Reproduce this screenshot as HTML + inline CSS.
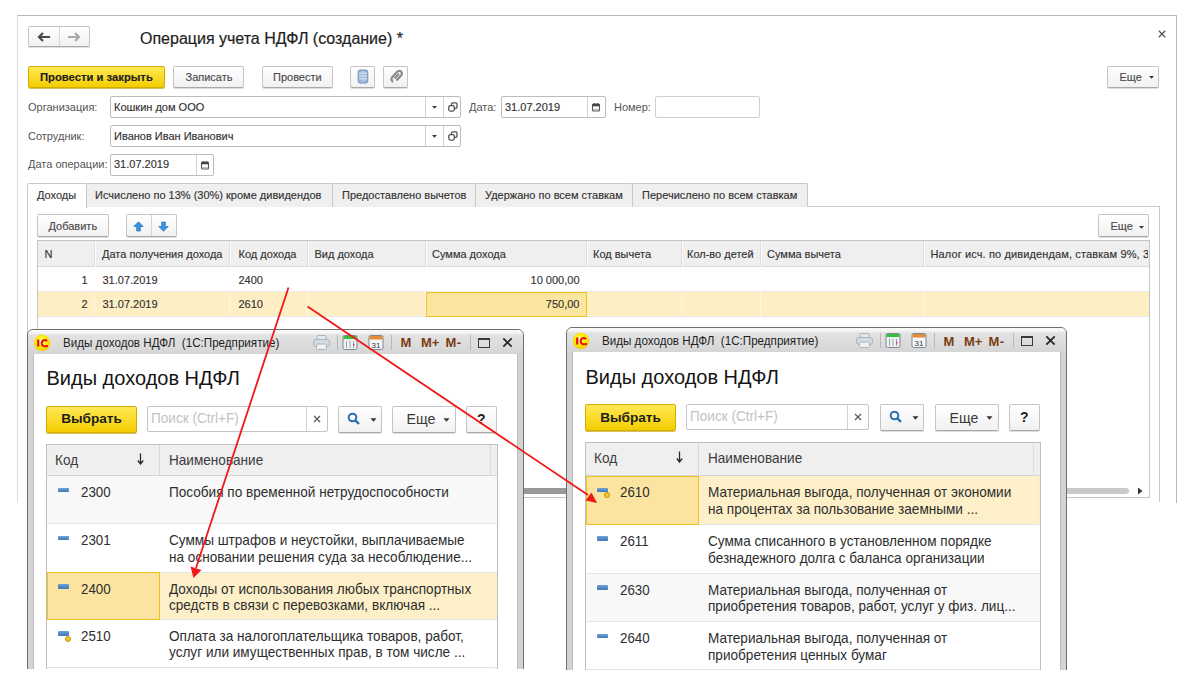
<!DOCTYPE html>
<html><head><meta charset="utf-8">
<style>
html,body{margin:0;padding:0;}
body{width:1200px;height:693px;overflow:hidden;background:#fff;position:relative;font-family:"Liberation Sans",sans-serif;color:#333;}
.a{position:absolute;box-sizing:border-box;}
.t{position:absolute;white-space:pre;line-height:1;}
.f11{font-size:11px;-webkit-text-stroke-width:0.15px;}
.btn{position:absolute;box-sizing:border-box;border:1px solid #c4c4c4;border-bottom-color:#a9a9a9;border-radius:2px;background:linear-gradient(#ffffff,#f1f1f1);box-shadow:0 1px 0 #dedede;}
.ybtn{position:absolute;box-sizing:border-box;border:1px solid #d2ad00;border-radius:2px;background:linear-gradient(#ffe955,#f4cd00);box-shadow:0 1px 0 #d8c060;}
.inp{position:absolute;box-sizing:border-box;border:1px solid #bdbdbd;border-radius:2px;background:#fff;}
.vl{position:absolute;width:1px;background:#cfcfcf;}
.hl{position:absolute;height:1px;background:#cfcfcf;}
.lbl{color:#555;-webkit-text-stroke-width:0;}
.tab{position:absolute;box-sizing:border-box;border:1px solid #c9c9c9;border-bottom:none;background:#efefef;border-radius:2px 2px 0 0;}
</style></head><body>

<!-- main form border -->
<div class="a" style="left:17px;top:15px;width:1160px;height:488px;border:1px solid #b8b8b8;border-left-color:#dcdcdc;border-bottom:none;"></div>

<!-- nav buttons -->
<div class="btn" style="left:28px;top:26px;width:62px;height:21px;"></div>
<div class="vl" style="left:59px;top:27px;height:19px;background:#d6d6d6;"></div>
<svg class="a" style="left:36px;top:31px" width="16" height="12" viewBox="0 0 16 12"><path d="M3 6H14M7 2L3 6L7 10" stroke="#4a4a4a" stroke-width="2.2" fill="none"/></svg>
<svg class="a" style="left:66px;top:31px" width="16" height="12" viewBox="0 0 16 12"><path d="M2 6H13M9 2L13 6L9 10" stroke="#a9a9a9" stroke-width="2.2" fill="none"/></svg>

<!-- title -->
<div class="t" style="left:140px;top:30.6px;font-size:16px;color:#1e1e1e;-webkit-text-stroke-width:0.2px;">Операция учета НДФЛ (создание) *</div>
<svg class="a" style="left:1158px;top:30px" width="8" height="8" viewBox="0 0 8 8"><path d="M0.8 0.8L7.2 7.2M7.2 0.8L0.8 7.2" stroke="#555" stroke-width="1.3"/></svg>

<!-- toolbar -->
<div class="ybtn" style="left:28px;top:66px;width:137px;height:22px;"></div>
<div class="t f11" style="left:40px;top:71.5px;font-size:11.25px;font-weight:bold;color:#1e1e1e;">Провести и закрыть</div>
<div class="btn" style="left:173px;top:66px;width:71px;height:22px;"></div>
<div class="t f11" style="left:185.5px;top:71.7px;color:#4a4a4a;">Записать</div>
<div class="btn" style="left:262px;top:66px;width:71px;height:22px;"></div>
<div class="t f11" style="left:273px;top:71.7px;color:#4a4a4a;">Провести</div>
<div class="btn" style="left:350px;top:66px;width:25px;height:22px;"></div>
<div class="btn" style="left:383px;top:66px;width:25px;height:22px;"></div>
<div class="btn" style="left:1107px;top:66px;width:52px;height:22px;"></div>
<div class="t f11" style="left:1119.5px;top:71.7px;color:#4a4a4a;">Еще</div>

<!-- fields -->
<div class="t f11 lbl" style="left:28px;top:101.7px;">Организация:</div>
<div class="inp" style="left:110px;top:96px;width:351px;height:22px;"></div>
<div class="vl" style="left:425px;top:97px;height:20px;"></div>
<div class="vl" style="left:443px;top:97px;height:20px;"></div>
<div class="t f11" style="left:114px;top:101.7px;">Кошкин дом ООО</div>
<div class="t f11 lbl" style="left:469px;top:101.7px;">Дата:</div>
<div class="inp" style="left:501px;top:96px;width:105px;height:22px;"></div>
<div class="vl" style="left:587px;top:97px;height:20px;"></div>
<div class="t f11" style="left:505px;top:101.7px;">31.07.2019</div>
<div class="t f11 lbl" style="left:614px;top:101.7px;">Номер:</div>
<div class="inp" style="left:655px;top:96px;width:105px;height:22px;border-color:#d0d0d0;"></div>

<div class="t f11 lbl" style="left:28px;top:130.7px;">Сотрудник:</div>
<div class="inp" style="left:110px;top:125px;width:351px;height:22px;"></div>
<div class="vl" style="left:425px;top:126px;height:20px;"></div>
<div class="vl" style="left:443px;top:126px;height:20px;"></div>
<div class="t f11" style="left:114px;top:130.7px;">Иванов Иван Иванович</div>

<div class="t f11 lbl" style="left:28px;top:159.4px;">Дата операции:</div>
<div class="inp" style="left:110px;top:154px;width:104px;height:22px;"></div>
<div class="vl" style="left:196px;top:155px;height:20px;"></div>
<div class="t f11" style="left:114px;top:159.4px;">31.07.2019</div>

<!-- tabs -->
<div class="a" style="left:27px;top:206px;width:1133px;height:296px;border:1px solid #c9c9c9;border-bottom:none;"></div>
<div class="tab" style="left:86px;top:183px;width:247px;height:24px;"></div>
<div class="tab" style="left:332px;top:183px;width:144px;height:24px;"></div>
<div class="tab" style="left:475px;top:183px;width:158px;height:24px;"></div>
<div class="tab" style="left:632px;top:183px;width:176px;height:24px;"></div>
<div class="tab" style="left:27px;top:183px;width:60px;height:25px;background:#fff;border-radius:2px 2px 0 0;"></div>
<div class="t f11" style="left:37px;top:190px;">Доходы</div>
<div class="t f11" style="left:95px;top:190px;">Исчислено по 13% (30%) кроме дивидендов</div>
<div class="t f11" style="left:342px;top:190px;">Предоставлено вычетов</div>
<div class="t f11" style="left:485px;top:190px;">Удержано по всем ставкам</div>
<div class="t f11" style="left:642px;top:190px;">Перечислено по всем ставкам</div>


<!-- tab page toolbar -->
<div class="btn" style="left:37px;top:214px;width:72px;height:23px;"></div>
<div class="t f11" style="left:48.5px;top:221px;color:#4a4a4a;">Добавить</div>
<div class="btn" style="left:126px;top:214px;width:51px;height:23px;"></div>
<div class="vl" style="left:151px;top:215px;height:21px;background:#d6d6d6;"></div>
<svg class="a" style="left:133px;top:221px" width="11" height="11" viewBox="0 0 11 11"><path d="M5.5 0.8L10.2 5.5H7.3V10H3.7V5.5H0.8Z" fill="#3a94de" stroke="#2370b8" stroke-width="0.7"/></svg>
<svg class="a" style="left:158px;top:221px" width="11" height="11" viewBox="0 0 11 11"><path d="M5.5 10.2L10.2 5.5H7.3V1H3.7V5.5H0.8Z" fill="#3a94de" stroke="#2370b8" stroke-width="0.7"/></svg>
<div class="btn" style="left:1098px;top:214px;width:51px;height:23px;"></div>
<div class="t f11" style="left:1110.5px;top:221px;color:#4a4a4a;">Еще</div>

<!-- table -->
<div class="a" style="left:37px;top:240px;width:1113px;height:258px;border:1px solid #c4c4c4;"></div>
<div class="a" style="left:38px;top:241px;width:1111px;height:26px;background:#efefef;border-bottom:1px solid #dadada;"></div>
<div class="a" style="left:38px;top:291px;width:1111px;height:26px;background:#fdefc3;border-top:1px solid #ececec;border-bottom:1px solid #e6e6e6;"></div>
<div class="vl" style="left:94px;top:241px;height:26px;background:#dedede;box-shadow:1px 0 0 #fbfbfb;"></div>
<div class="vl" style="left:94px;top:292px;height:24px;background:#fdf7e3;"></div>
<div class="vl" style="left:229px;top:241px;height:26px;background:#dedede;box-shadow:1px 0 0 #fbfbfb;"></div>
<div class="vl" style="left:229px;top:292px;height:24px;background:#fdf7e3;"></div>
<div class="vl" style="left:307px;top:241px;height:26px;background:#dedede;box-shadow:1px 0 0 #fbfbfb;"></div>
<div class="vl" style="left:307px;top:292px;height:24px;background:#fdf7e3;"></div>
<div class="vl" style="left:425px;top:241px;height:26px;background:#dedede;box-shadow:1px 0 0 #fbfbfb;"></div>
<div class="vl" style="left:425px;top:292px;height:24px;background:#fdf7e3;"></div>
<div class="vl" style="left:586px;top:241px;height:26px;background:#dedede;box-shadow:1px 0 0 #fbfbfb;"></div>
<div class="vl" style="left:586px;top:292px;height:24px;background:#fdf7e3;"></div>
<div class="vl" style="left:681px;top:241px;height:26px;background:#dedede;box-shadow:1px 0 0 #fbfbfb;"></div>
<div class="vl" style="left:681px;top:292px;height:24px;background:#fdf7e3;"></div>
<div class="vl" style="left:760px;top:241px;height:26px;background:#dedede;box-shadow:1px 0 0 #fbfbfb;"></div>
<div class="vl" style="left:760px;top:292px;height:24px;background:#fdf7e3;"></div>
<div class="vl" style="left:923px;top:241px;height:26px;background:#dedede;box-shadow:1px 0 0 #fbfbfb;"></div>
<div class="vl" style="left:923px;top:292px;height:24px;background:#fdf7e3;"></div>

<div class="a" style="left:426px;top:292px;width:161px;height:25px;background:#fbe6a0;border:1.5px solid #f2c220;"></div>
<div class="t f11" style="left:44.5px;top:248.7px;">N</div>
<div class="t f11" style="left:102px;top:248.7px;">Дата получения дохода</div>
<div class="t f11" style="left:238.5px;top:248.7px;">Код дохода</div>
<div class="t f11" style="left:314.5px;top:248.7px;">Вид дохода</div>
<div class="t f11" style="left:432px;top:248.7px;">Сумма дохода</div>
<div class="t f11" style="left:593px;top:248.7px;">Код вычета</div>
<div class="t f11" style="left:687px;top:248.7px;">Кол-во детей</div>
<div class="t f11" style="left:767px;top:248.7px;">Сумма вычета</div>
<div class="a" style="left:924px;top:241px;width:224px;height:25px;overflow:hidden;"><div class="t f11" style="left:6.5px;top:7.7px;letter-spacing:0.12px;">Налог исч. по дивидендам, ставкам 9%, 30%</div></div>

<div class="t f11" style="right:1112.5px;top:274.7px;">1</div>
<div class="t f11" style="left:102.5px;top:274.7px;">31.07.2019</div>
<div class="t f11" style="left:238.5px;top:274.7px;">2400</div>
<div class="t f11" style="right:620.5px;top:274.7px;">10 000,00</div>
<div class="t f11" style="right:1112.5px;top:299.2px;">2</div>
<div class="t f11" style="left:102.5px;top:299.2px;">31.07.2019</div>
<div class="t f11" style="left:238.5px;top:299.2px;">2610</div>
<div class="t f11" style="right:620.5px;top:299.2px;">750,00</div>

<!-- scrollbar -->
<div class="a" style="left:38px;top:488px;width:1091px;height:6px;border-radius:3px;background:#c9c9c9;"></div>
<div class="a" style="left:520px;top:488px;width:50px;height:6px;background:#999;"></div>
<svg class="a" style="left:1137px;top:487px" width="6" height="8" viewBox="0 0 6 8"><path d="M1 0.5L5.5 4L1 7.5Z" fill="#333"/></svg>



<!-- icons -->
<svg class="a" style="left:430.5px;top:104.5px" width="7" height="5" viewBox="0 0 7 5"><path d="M1 1H6L3.5 3.8Z" fill="#3a3a3a"/></svg>
<svg class="a" style="left:447.5px;top:102px" width="10" height="10" viewBox="0 0 10 10"><rect x="3.5" y="0.8" width="5.5" height="5.5" rx="1.2" fill="#fff" stroke="#505050" stroke-width="1.3"/><rect x="0.8" y="3.6" width="5.5" height="5.5" rx="1.5" fill="#fff" stroke="#505050" stroke-width="1.3"/></svg>
<svg class="a" style="left:430.5px;top:133.5px" width="7" height="5" viewBox="0 0 7 5"><path d="M1 1H6L3.5 3.8Z" fill="#3a3a3a"/></svg>
<svg class="a" style="left:447.5px;top:131px" width="10" height="10" viewBox="0 0 10 10"><rect x="3.5" y="0.8" width="5.5" height="5.5" rx="1.2" fill="#fff" stroke="#505050" stroke-width="1.3"/><rect x="0.8" y="3.6" width="5.5" height="5.5" rx="1.5" fill="#fff" stroke="#505050" stroke-width="1.3"/></svg>
<svg class="a" style="left:591px;top:101.5px" width="10" height="10" viewBox="0 0 10 10"><rect x="1.5" y="2" width="7" height="7" rx="1" fill="#fff" stroke="#555" stroke-width="1.1"/><rect x="1.5" y="2" width="7" height="2.3" fill="#444"/><path d="M3.3 1V2.5M6.7 1V2.5" stroke="#444" stroke-width="0.9"/><path d="M2.3 7.4H7.7" stroke="#aaa" stroke-width="0.9"/></svg>
<svg class="a" style="left:200px;top:159.5px" width="10" height="10" viewBox="0 0 10 10"><rect x="1.5" y="2" width="7" height="7" rx="1" fill="#fff" stroke="#555" stroke-width="1.1"/><rect x="1.5" y="2" width="7" height="2.3" fill="#444"/><path d="M3.3 1V2.5M6.7 1V2.5" stroke="#444" stroke-width="0.9"/><path d="M2.3 7.4H7.7" stroke="#aaa" stroke-width="0.9"/></svg>
<svg class="a" style="left:357px;top:69px" width="12" height="15" viewBox="0 0 12 15"><rect x="1.2" y="1" width="9.6" height="13" rx="2" fill="#9db8d8" stroke="#6f8fb5" stroke-width="1"/><path d="M2 4.2H10M2 7H10M2 9.8H10" stroke="#e8f0fa" stroke-width="1"/><path d="M6 1.5V13.5" stroke="#c8d8ec" stroke-width="0.8"/></svg>
<svg class="a" style="left:389px;top:69px" width="15" height="15" viewBox="0 0 15 15"><path d="M4 13 Q1.5 11 3 8.5 L8 3 Q10 1 12 2.5 Q13.8 4.3 12 6.5 L7.5 11.5" fill="none" stroke="#8a8a8a" stroke-width="2.2"/><path d="M5.5 9.5 L10 4.8" stroke="#8a8a8a" stroke-width="2"/></svg>
<svg class="a" style="left:1147.5px;top:75px" width="7" height="5" viewBox="0 0 7 5"><path d="M1 1H6L3.5 3.8Z" fill="#3a3a3a"/></svg>
<svg class="a" style="left:1138px;top:224.5px" width="7" height="5" viewBox="0 0 7 5"><path d="M1 1H6L3.5 3.8Z" fill="#3a3a3a"/></svg>
<div class="a" style="left:27px;top:329px;width:497px;height:339.5px;overflow:hidden;">
<div class="a" style="left:0;top:0;width:497px;height:349.5px;border:1px solid #6f6f6f;border-radius:6px 6px 0 0;background:#d3d3d3;"></div>
<div class="a" style="left:1px;top:1px;width:495px;height:25px;border-radius:5px 5px 0 0;background:linear-gradient(#fafafa 0,#f4f4f4 3px,#e2e2e2 5px,#dcdcdc 60%,#d4d4d4);"></div>
<div class="a" style="left:6px;top:25px;width:485px;height:339.5px;background:#fff;border:1px solid #bdbdbd;border-top:none;border-bottom:none;"></div>
<svg class="a" style="left:6px;top:4.5px" width="18" height="18" viewBox="0 0 18 18"><defs><radialGradient id="lg27" cx="0.45" cy="0.4" r="0.6"><stop offset="0" stop-color="#fffbd0"/><stop offset="0.5" stop-color="#fff000"/><stop offset="1" stop-color="#f5c800"/></radialGradient></defs><circle cx="9" cy="9" r="8.2" fill="url(#lg27)"/><path d="M5.2 5.5V12.5" stroke="#e8100a" stroke-width="2.2"/><path d="M14 7.2Q12.5 5.6 10.8 6.2Q8.3 7.2 8.8 10Q9.5 12.6 12.3 12.2L15 12" fill="none" stroke="#e8100a" stroke-width="2"/></svg>
<div class="t" style="left:36px;top:7.62px;font-size:12.5px;color:#1e1e1e;font-weight:-webkit-text-stroke:0.15px #1e1e1e;;transform:scaleX(0.93);transform-origin:0 0;">Виды доходов НДФЛ  (1С:Предприятие)</div>
<svg class="a" style="left:285px;top:5px" width="19" height="17" viewBox="0 0 19 17"><rect x="5" y="1.5" width="9" height="5" rx="1" fill="#e4e8ec" stroke="#aab4be"/><rect x="1.5" y="5.5" width="16" height="7" rx="2.5" fill="#d4dbe2" stroke="#aab4be"/><rect x="4.5" y="10" width="10" height="5.5" rx="1" fill="#eef1f4" stroke="#aab4be"/></svg>
<div class="a" style="left:310px;top:6px;width:1px;height:15px;background:#b8b8b8;"></div>
<svg class="a" style="left:315px;top:5px" width="16" height="17" viewBox="0 0 16 17"><rect x="1" y="1.5" width="14" height="14" rx="1.5" fill="#eef0f2" stroke="#7c8893"/><rect x="1.5" y="2" width="13" height="3" fill="#39c03a"/><path d="M4.5 7V14M8 7V14M11.5 7V14" stroke="#9aa4ad"/><rect x="11" y="10" width="1.5" height="1.5" fill="#e03070"/></svg>
<svg class="a" style="left:341px;top:5px" width="16" height="17" viewBox="0 0 16 17"><rect x="1" y="1.5" width="14" height="14" rx="1.5" fill="#f4f6f8" stroke="#7c8893"/><rect x="1.5" y="2" width="13" height="3.5" fill="#e08a3a"/><text x="8" y="14" font-family="Liberation Sans" font-size="8" text-anchor="middle" fill="#333">31</text></svg>
<div class="a" style="left:364px;top:6px;width:1px;height:15px;background:#b8b8b8;"></div>
<div class="t" style="left:373.5px;top:7.30px;font-size:13px;color:#7a3c12;font-weight:bold;">M</div>
<div class="t" style="left:394px;top:7.30px;font-size:13px;color:#7a3c12;font-weight:bold;">M+</div>
<div class="t" style="left:418.5px;top:7.30px;font-size:13px;color:#7a3c12;font-weight:bold;letter-spacing:0.5px;">M-</div>
<div class="a" style="left:443px;top:6px;width:1px;height:15px;background:#b8b8b8;"></div>
<div class="a" style="left:451px;top:8.5px;width:12px;height:10.5px;border:1.5px solid #3a3a3a;border-top-width:2px;"></div>
<svg class="a" style="left:474.5px;top:8px" width="11" height="11" viewBox="0 0 11 11"><path d="M1.3 1.3L9.7 9.7M9.7 1.3L1.3 9.7" stroke="#2a2a2a" stroke-width="1.8"/></svg>
<div class="t" style="left:19.5px;top:39.37px;font-size:20px;color:#151515;font-weight:-webkit-text-stroke:0.2px #151515;;">Виды доходов НДФЛ</div>
<div class="ybtn" style="left:19px;top:76.5px;width:91px;height:27px;"></div>
<div class="t" style="left:34.2px;top:83.29px;font-size:13.6px;color:#1e1e1e;font-weight:bold;">Выбрать</div>
<div class="inp" style="left:120px;top:77px;width:181.0px;height:26px;border-color:#c4c4c4;"></div>
<div class="vl" style="left:278.5px;top:78px;height:24px;background:#d2d2d2;"></div>
<div class="t" style="left:124.2px;top:82.03px;font-size:14.5px;color:#c2c2c2;font-weight:normal;transform:scaleX(0.937);transform-origin:0 0;">Поиск (Ctrl+F)</div>
<svg class="a" style="left:286.0px;top:86px" width="8" height="8" viewBox="0 0 8 8"><path d="M1 1L7 7M7 1L1 7" stroke="#555" stroke-width="1.2"/></svg>
<div class="btn" style="left:311.0px;top:77px;width:44px;height:26.5px;"></div>
<svg class="a" style="left:320.0px;top:83px" width="14" height="14" viewBox="0 0 14 14"><circle cx="5.5" cy="5.5" r="3.8" fill="none" stroke="#2a70b0" stroke-width="2"/><path d="M8.3 8.3L12 12" stroke="#2a70b0" stroke-width="2.4"/></svg>
<svg class="a" style="left:342.5px;top:88.5px" width="7" height="4" viewBox="0 0 7 4"><path d="M0.5 0.3H6.5L3.5 3.7Z" fill="#333"/></svg>
<div class="btn" style="left:365.0px;top:77px;width:63.5px;height:26.5px;"></div>
<div class="t" style="left:379.5px;top:83.48px;font-size:14.2px;color:#3a3a3a;font-weight:normal;">Еще</div>
<svg class="a" style="left:415.5px;top:88.5px" width="7" height="4" viewBox="0 0 7 4"><path d="M0.5 0.3H6.5L3.5 3.7Z" fill="#333"/></svg>
<div class="btn" style="left:439px;top:77px;width:31px;height:26.5px;"></div>
<div class="t" style="left:450px;top:83.15px;font-size:14px;color:#1e1e1e;font-weight:bold;">?</div>
<div class="a" style="left:19px;top:114.5px;width:451.5px;height:339.5px;border:1px solid #bfbfbf;border-bottom:none;background:#fff;"></div>
<div class="a" style="left:20px;top:115.5px;width:449.5px;height:31.5px;background:#efefef;border-bottom:1px solid #d4d4d4;"></div>
<div class="vl" style="left:132px;top:115.5px;height:31.5px;background:#d8d8d8;"></div>
<div class="vl" style="left:463px;top:115.5px;height:339.5px;background:#dcdcdc;"></div>
<div class="t" style="left:28.2px;top:123.98px;font-size:14.5px;color:#3c3c3c;font-weight:normal;transform:scaleX(0.937);transform-origin:0 0;">Код</div>
<svg class="a" style="left:110px;top:124.25px" width="7" height="12" viewBox="0 0 7 12"><path d="M3.5 0.5V10.5M0.8 7.5L3.5 11L6.2 7.5" stroke="#2a2a2a" stroke-width="1.3" fill="none"/></svg>
<div class="t" style="left:141.5px;top:123.98px;font-size:14.5px;color:#3c3c3c;font-weight:normal;transform:scaleX(0.937);transform-origin:0 0;">Наименование</div>
<div class="a" style="left:20px;top:147.0px;width:449.5px;height:48.4px;background:#f8f8f8;border-bottom:1px solid #e4e4e4;"></div>
<div class="a" style="left:31px;top:158.5px;width:11px;height:4.5px;border-radius:1px;background:linear-gradient(#6fa2d8,#3f78b4);"></div>
<div class="t" style="left:53.8px;top:155.93px;font-size:14.5px;color:#2e2e2e;font-weight:-webkit-text-stroke:0.25px #2e2e2e;;transform:scaleX(0.92);transform-origin:0 0;">2300</div>
<div class="t" style="left:141.8px;top:155.93px;font-size:14.5px;color:#2e2e2e;font-weight:-webkit-text-stroke:0.25px #2e2e2e;;transform:scaleX(0.937);transform-origin:0 0;">Пособия по временной нетрудоспособности</div>
<div class="a" style="left:20px;top:195.4px;width:449.5px;height:48.2px;background:#fff;border-bottom:1px solid #e4e4e4;"></div>
<div class="a" style="left:31px;top:206.9px;width:11px;height:4.5px;border-radius:1px;background:linear-gradient(#6fa2d8,#3f78b4);"></div>
<div class="t" style="left:53.8px;top:204.33px;font-size:14.5px;color:#2e2e2e;font-weight:-webkit-text-stroke:0.25px #2e2e2e;;transform:scaleX(0.92);transform-origin:0 0;">2301</div>
<div class="t" style="left:141.8px;top:204.33px;font-size:14.5px;color:#2e2e2e;font-weight:-webkit-text-stroke:0.25px #2e2e2e;;transform:scaleX(0.937);transform-origin:0 0;">Суммы штрафов и неустойки, выплачиваемые</div>
<div class="t" style="left:141.8px;top:221.13px;font-size:14.5px;color:#2e2e2e;font-weight:-webkit-text-stroke:0.25px #2e2e2e;;transform:scaleX(0.937);transform-origin:0 0;">на основании решения суда за несоблюдение...</div>
<div class="a" style="left:20px;top:243.60000000000002px;width:449.5px;height:47px;background:#fdf0c8;border-bottom:1px solid #e4e4e4;"></div>
<div class="a" style="left:20px;top:243.10000000000002px;width:113px;height:47.5px;background:#fbe4a0;border:1.5px solid #f2c220;"></div>
<div class="vl" style="left:463px;top:243.60000000000002px;height:47px;background:#fff4d8;"></div>
<div class="a" style="left:31px;top:255.10000000000002px;width:11px;height:4.5px;border-radius:1px;background:linear-gradient(#6fa2d8,#3f78b4);"></div>
<div class="t" style="left:53.8px;top:252.53px;font-size:14.5px;color:#2e2e2e;font-weight:-webkit-text-stroke:0.25px #2e2e2e;;transform:scaleX(0.92);transform-origin:0 0;">2400</div>
<div class="t" style="left:141.8px;top:252.53px;font-size:14.5px;color:#2e2e2e;font-weight:-webkit-text-stroke:0.25px #2e2e2e;;transform:scaleX(0.937);transform-origin:0 0;">Доходы от использования любых транспортных</div>
<div class="t" style="left:141.8px;top:269.33px;font-size:14.5px;color:#2e2e2e;font-weight:-webkit-text-stroke:0.25px #2e2e2e;;transform:scaleX(0.937);transform-origin:0 0;">средств в связи с перевозками, включая ...</div>
<div class="a" style="left:20px;top:290.6px;width:449.5px;height:48.4px;background:#fff;border-bottom:1px solid #e4e4e4;"></div>
<div class="a" style="left:31px;top:302.1px;width:11px;height:4.5px;border-radius:1px;background:linear-gradient(#6fa2d8,#3f78b4);"></div>
<div class="a" style="left:38px;top:306.6px;width:6px;height:6px;border-radius:50%;background:#f5cc20;border:1.2px solid #c8900a;"></div>
<div class="t" style="left:53.8px;top:299.53px;font-size:14.5px;color:#2e2e2e;font-weight:-webkit-text-stroke:0.25px #2e2e2e;;transform:scaleX(0.92);transform-origin:0 0;">2510</div>
<div class="t" style="left:141.8px;top:299.53px;font-size:14.5px;color:#2e2e2e;font-weight:-webkit-text-stroke:0.25px #2e2e2e;;transform:scaleX(0.937);transform-origin:0 0;">Оплата за налогоплательщика товаров, работ,</div>
<div class="t" style="left:141.8px;top:316.33px;font-size:14.5px;color:#2e2e2e;font-weight:-webkit-text-stroke:0.25px #2e2e2e;;transform:scaleX(0.937);transform-origin:0 0;">услуг или имущественных прав, в том числе ...</div>
</div>
<div class="a" style="left:566px;top:327.3px;width:501px;height:343.2px;overflow:hidden;">
<div class="a" style="left:0;top:0;width:501px;height:353.2px;border:1px solid #6f6f6f;border-radius:6px 6px 0 0;background:#d3d3d3;"></div>
<div class="a" style="left:1px;top:1px;width:499px;height:25px;border-radius:5px 5px 0 0;background:linear-gradient(#fafafa 0,#f4f4f4 3px,#e2e2e2 5px,#dcdcdc 60%,#d4d4d4);"></div>
<div class="a" style="left:6px;top:25px;width:489px;height:343.2px;background:#fff;border:1px solid #bdbdbd;border-top:none;border-bottom:none;"></div>
<svg class="a" style="left:6px;top:4.5px" width="18" height="18" viewBox="0 0 18 18"><defs><radialGradient id="lg566" cx="0.45" cy="0.4" r="0.6"><stop offset="0" stop-color="#fffbd0"/><stop offset="0.5" stop-color="#fff000"/><stop offset="1" stop-color="#f5c800"/></radialGradient></defs><circle cx="9" cy="9" r="8.2" fill="url(#lg566)"/><path d="M5.2 5.5V12.5" stroke="#e8100a" stroke-width="2.2"/><path d="M14 7.2Q12.5 5.6 10.8 6.2Q8.3 7.2 8.8 10Q9.5 12.6 12.3 12.2L15 12" fill="none" stroke="#e8100a" stroke-width="2"/></svg>
<div class="t" style="left:36px;top:7.62px;font-size:12.5px;color:#1e1e1e;font-weight:-webkit-text-stroke:0.15px #1e1e1e;;transform:scaleX(0.93);transform-origin:0 0;">Виды доходов НДФЛ  (1С:Предприятие)</div>
<svg class="a" style="left:289px;top:5px" width="19" height="17" viewBox="0 0 19 17"><rect x="5" y="1.5" width="9" height="5" rx="1" fill="#e4e8ec" stroke="#aab4be"/><rect x="1.5" y="5.5" width="16" height="7" rx="2.5" fill="#d4dbe2" stroke="#aab4be"/><rect x="4.5" y="10" width="10" height="5.5" rx="1" fill="#eef1f4" stroke="#aab4be"/></svg>
<div class="a" style="left:314px;top:6px;width:1px;height:15px;background:#b8b8b8;"></div>
<svg class="a" style="left:319px;top:5px" width="16" height="17" viewBox="0 0 16 17"><rect x="1" y="1.5" width="14" height="14" rx="1.5" fill="#eef0f2" stroke="#7c8893"/><rect x="1.5" y="2" width="13" height="3" fill="#39c03a"/><path d="M4.5 7V14M8 7V14M11.5 7V14" stroke="#9aa4ad"/><rect x="11" y="10" width="1.5" height="1.5" fill="#e03070"/></svg>
<svg class="a" style="left:345px;top:5px" width="16" height="17" viewBox="0 0 16 17"><rect x="1" y="1.5" width="14" height="14" rx="1.5" fill="#f4f6f8" stroke="#7c8893"/><rect x="1.5" y="2" width="13" height="3.5" fill="#e08a3a"/><text x="8" y="14" font-family="Liberation Sans" font-size="8" text-anchor="middle" fill="#333">31</text></svg>
<div class="a" style="left:368px;top:6px;width:1px;height:15px;background:#b8b8b8;"></div>
<div class="t" style="left:377.5px;top:7.30px;font-size:13px;color:#7a3c12;font-weight:bold;">M</div>
<div class="t" style="left:398px;top:7.30px;font-size:13px;color:#7a3c12;font-weight:bold;">M+</div>
<div class="t" style="left:422.5px;top:7.30px;font-size:13px;color:#7a3c12;font-weight:bold;letter-spacing:0.5px;">M-</div>
<div class="a" style="left:447px;top:6px;width:1px;height:15px;background:#b8b8b8;"></div>
<div class="a" style="left:455px;top:8.5px;width:12px;height:10.5px;border:1.5px solid #3a3a3a;border-top-width:2px;"></div>
<svg class="a" style="left:478.5px;top:8px" width="11" height="11" viewBox="0 0 11 11"><path d="M1.3 1.3L9.7 9.7M9.7 1.3L1.3 9.7" stroke="#2a2a2a" stroke-width="1.8"/></svg>
<div class="t" style="left:19.5px;top:39.37px;font-size:20px;color:#151515;font-weight:-webkit-text-stroke:0.2px #151515;;">Виды доходов НДФЛ</div>
<div class="ybtn" style="left:19px;top:76.5px;width:91px;height:27px;"></div>
<div class="t" style="left:34.2px;top:83.29px;font-size:13.6px;color:#1e1e1e;font-weight:bold;">Выбрать</div>
<div class="inp" style="left:120px;top:77px;width:183.4px;height:26px;border-color:#c4c4c4;"></div>
<div class="vl" style="left:280.9px;top:78px;height:24px;background:#d2d2d2;"></div>
<div class="t" style="left:124.2px;top:82.03px;font-size:14.5px;color:#c2c2c2;font-weight:normal;transform:scaleX(0.937);transform-origin:0 0;">Поиск (Ctrl+F)</div>
<svg class="a" style="left:288.4px;top:86px" width="8" height="8" viewBox="0 0 8 8"><path d="M1 1L7 7M7 1L1 7" stroke="#555" stroke-width="1.2"/></svg>
<div class="btn" style="left:314.0px;top:77px;width:44px;height:26.5px;"></div>
<svg class="a" style="left:323.0px;top:83px" width="14" height="14" viewBox="0 0 14 14"><circle cx="5.5" cy="5.5" r="3.8" fill="none" stroke="#2a70b0" stroke-width="2"/><path d="M8.3 8.3L12 12" stroke="#2a70b0" stroke-width="2.4"/></svg>
<svg class="a" style="left:345.5px;top:88.5px" width="7" height="4" viewBox="0 0 7 4"><path d="M0.5 0.3H6.5L3.5 3.7Z" fill="#333"/></svg>
<div class="btn" style="left:368.6px;top:77px;width:64.3px;height:26.5px;"></div>
<div class="t" style="left:383.5px;top:83.48px;font-size:14.2px;color:#3a3a3a;font-weight:normal;">Еще</div>
<svg class="a" style="left:419.5px;top:88.5px" width="7" height="4" viewBox="0 0 7 4"><path d="M0.5 0.3H6.5L3.5 3.7Z" fill="#333"/></svg>
<div class="btn" style="left:443px;top:77px;width:31px;height:26.5px;"></div>
<div class="t" style="left:454px;top:83.15px;font-size:14px;color:#1e1e1e;font-weight:bold;">?</div>
<div class="a" style="left:19px;top:115px;width:455.5px;height:343.2px;border:1px solid #bfbfbf;border-bottom:none;background:#fff;"></div>
<div class="a" style="left:20px;top:116px;width:453.5px;height:33.2px;background:#efefef;border-bottom:1px solid #d4d4d4;"></div>
<div class="vl" style="left:132px;top:116px;height:33.2px;background:#d8d8d8;"></div>
<div class="vl" style="left:467px;top:116px;height:343.2px;background:#dcdcdc;"></div>
<div class="t" style="left:28.2px;top:123.83px;font-size:14.5px;color:#3c3c3c;font-weight:normal;transform:scaleX(0.937);transform-origin:0 0;">Код</div>
<svg class="a" style="left:110px;top:124.1px" width="7" height="12" viewBox="0 0 7 12"><path d="M3.5 0.5V10.5M0.8 7.5L3.5 11L6.2 7.5" stroke="#2a2a2a" stroke-width="1.3" fill="none"/></svg>
<div class="t" style="left:141.5px;top:123.83px;font-size:14.5px;color:#3c3c3c;font-weight:normal;transform:scaleX(0.937);transform-origin:0 0;">Наименование</div>
<div class="a" style="left:20px;top:149.2px;width:453.5px;height:48.5px;background:#fdf0c8;border-bottom:1px solid #e4e4e4;"></div>
<div class="a" style="left:20px;top:148.7px;width:113px;height:49.0px;background:#fbe4a0;border:1.5px solid #f2c220;"></div>
<div class="vl" style="left:467px;top:149.2px;height:48.5px;background:#fff4d8;"></div>
<div class="a" style="left:31px;top:160.7px;width:11px;height:4.5px;border-radius:1px;background:linear-gradient(#6fa2d8,#3f78b4);"></div>
<div class="a" style="left:38px;top:165.2px;width:6px;height:6px;border-radius:50%;background:#f5cc20;border:1.2px solid #c8900a;"></div>
<div class="t" style="left:53.8px;top:158.13px;font-size:14.5px;color:#2e2e2e;font-weight:-webkit-text-stroke:0.25px #2e2e2e;;transform:scaleX(0.92);transform-origin:0 0;">2610</div>
<div class="t" style="left:141.8px;top:158.13px;font-size:14.5px;color:#2e2e2e;font-weight:-webkit-text-stroke:0.25px #2e2e2e;;transform:scaleX(0.937);transform-origin:0 0;">Материальная выгода, полученная от экономии</div>
<div class="t" style="left:141.8px;top:174.93px;font-size:14.5px;color:#2e2e2e;font-weight:-webkit-text-stroke:0.25px #2e2e2e;;transform:scaleX(0.937);transform-origin:0 0;">на процентах за пользование заемными ...</div>
<div class="a" style="left:20px;top:197.7px;width:453.5px;height:48.6px;background:#fff;border-bottom:1px solid #e4e4e4;"></div>
<div class="a" style="left:31px;top:209.2px;width:11px;height:4.5px;border-radius:1px;background:linear-gradient(#6fa2d8,#3f78b4);"></div>
<div class="t" style="left:53.8px;top:206.63px;font-size:14.5px;color:#2e2e2e;font-weight:-webkit-text-stroke:0.25px #2e2e2e;;transform:scaleX(0.92);transform-origin:0 0;">2611</div>
<div class="t" style="left:141.8px;top:206.63px;font-size:14.5px;color:#2e2e2e;font-weight:-webkit-text-stroke:0.25px #2e2e2e;;transform:scaleX(0.937);transform-origin:0 0;">Сумма списанного в установленном порядке</div>
<div class="t" style="left:141.8px;top:223.43px;font-size:14.5px;color:#2e2e2e;font-weight:-webkit-text-stroke:0.25px #2e2e2e;;transform:scaleX(0.937);transform-origin:0 0;">безнадежного долга с баланса организации</div>
<div class="a" style="left:20px;top:246.29999999999998px;width:453.5px;height:48.9px;background:#f8f8f8;border-bottom:1px solid #e4e4e4;"></div>
<div class="a" style="left:31px;top:257.79999999999995px;width:11px;height:4.5px;border-radius:1px;background:linear-gradient(#6fa2d8,#3f78b4);"></div>
<div class="t" style="left:53.8px;top:255.23px;font-size:14.5px;color:#2e2e2e;font-weight:-webkit-text-stroke:0.25px #2e2e2e;;transform:scaleX(0.92);transform-origin:0 0;">2630</div>
<div class="t" style="left:141.8px;top:255.23px;font-size:14.5px;color:#2e2e2e;font-weight:-webkit-text-stroke:0.25px #2e2e2e;;transform:scaleX(0.937);transform-origin:0 0;">Материальная выгода, полученная от</div>
<div class="t" style="left:141.8px;top:272.03px;font-size:14.5px;color:#2e2e2e;font-weight:-webkit-text-stroke:0.25px #2e2e2e;;transform:scaleX(0.937);transform-origin:0 0;">приобретения товаров, работ, услуг у физ. лиц...</div>
<div class="a" style="left:20px;top:295.2px;width:453.5px;height:47.7px;background:#fff;border-bottom:1px solid #e4e4e4;"></div>
<div class="a" style="left:31px;top:306.7px;width:11px;height:4.5px;border-radius:1px;background:linear-gradient(#6fa2d8,#3f78b4);"></div>
<div class="t" style="left:53.8px;top:304.13px;font-size:14.5px;color:#2e2e2e;font-weight:-webkit-text-stroke:0.25px #2e2e2e;;transform:scaleX(0.92);transform-origin:0 0;">2640</div>
<div class="t" style="left:141.8px;top:304.13px;font-size:14.5px;color:#2e2e2e;font-weight:-webkit-text-stroke:0.25px #2e2e2e;;transform:scaleX(0.937);transform-origin:0 0;">Материальная выгода, полученная от</div>
<div class="t" style="left:141.8px;top:320.93px;font-size:14.5px;color:#2e2e2e;font-weight:-webkit-text-stroke:0.25px #2e2e2e;;transform:scaleX(0.937);transform-origin:0 0;">приобретения ценных бумаг</div>
</div>
<svg class="a" style="left:0;top:0" width="1200" height="693" viewBox="0 0 1200 693">
<path d="M288.5 287.5L196 568" stroke="#f01818" stroke-width="1.8" fill="none"/>
<path d="M193.5 578L190.5 566.5L201.5 570Z" fill="#f01818"/>
<path d="M307.5 306.5L588 495" stroke="#f01818" stroke-width="1.8" fill="none"/>
<path d="M597 503L585.5 500.5L591.5 492.5Z" fill="#f01818"/>
</svg>
</body></html>
